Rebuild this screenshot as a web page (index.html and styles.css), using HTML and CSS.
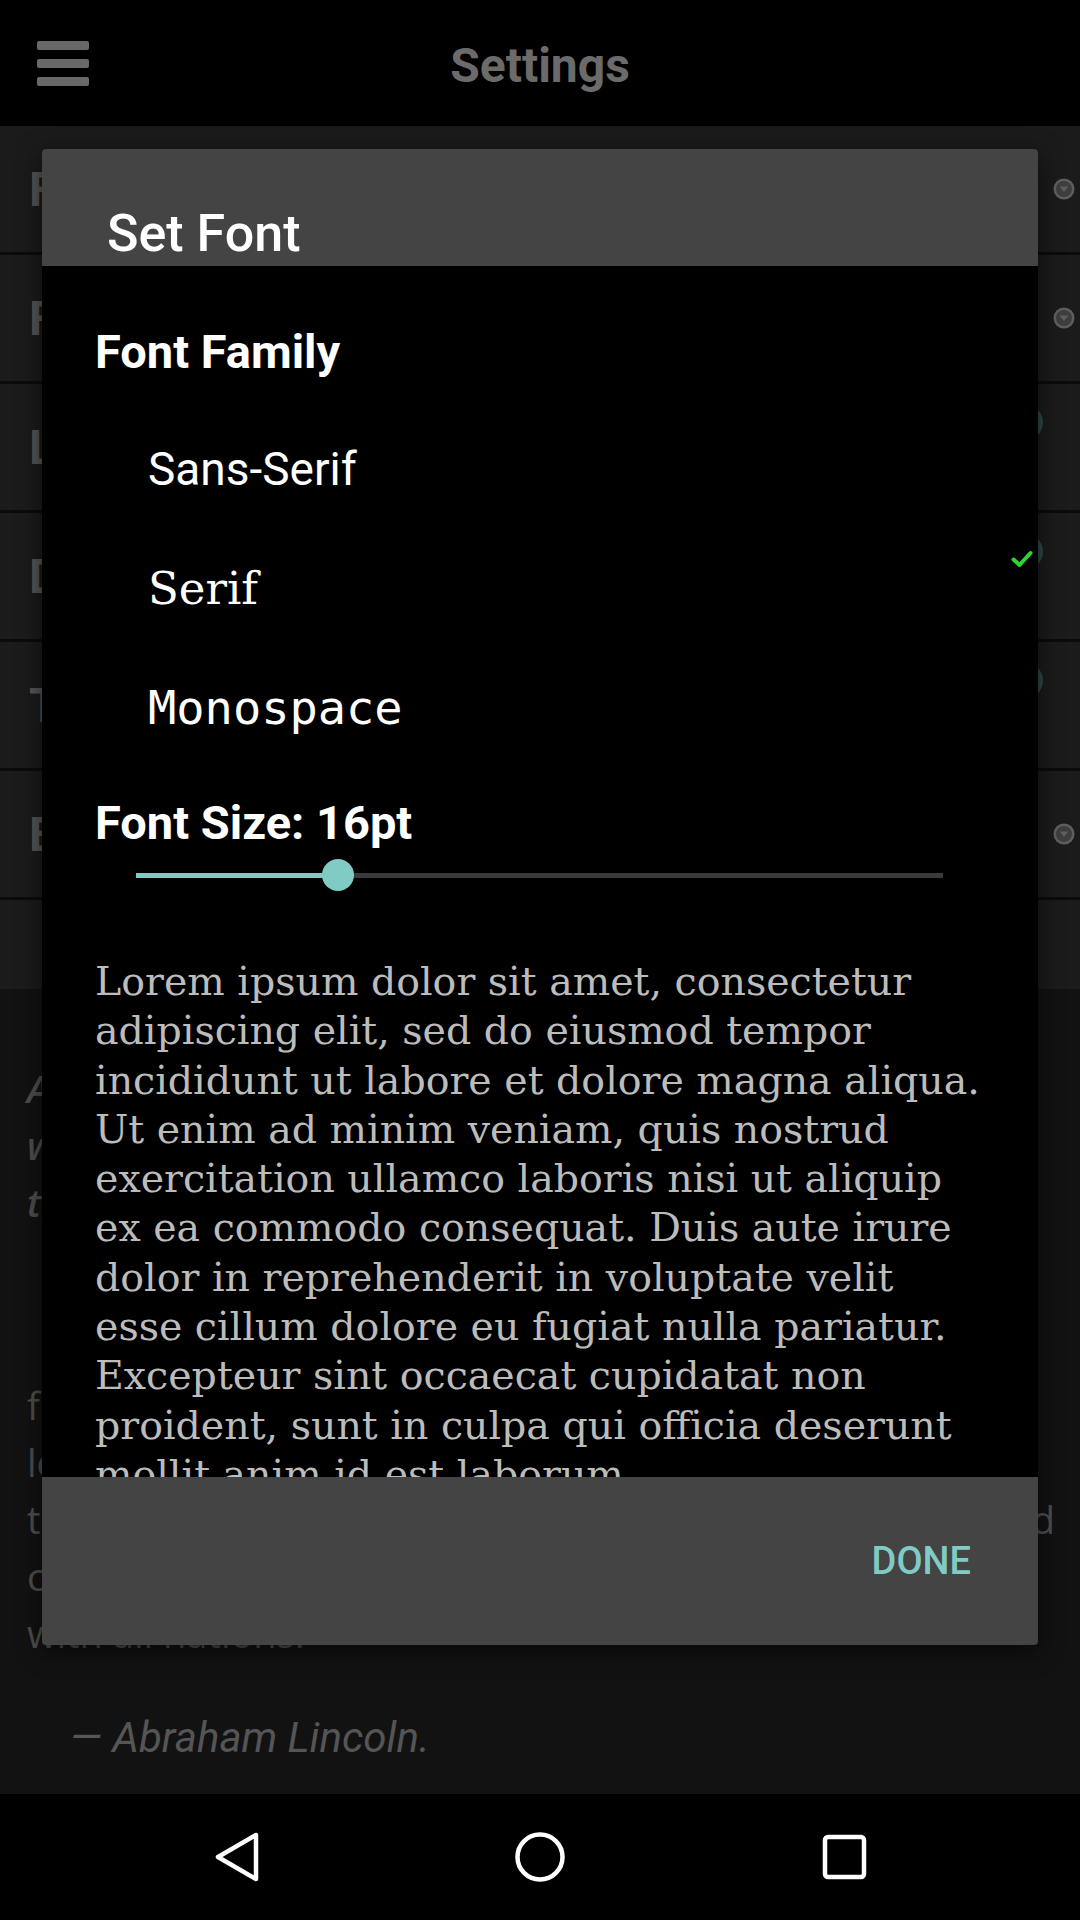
FILE: index.html
```html
<!DOCTYPE html>
<html lang="en">
<head>
<meta charset="utf-8">
<title>Settings – Set Font</title>
<link rel="stylesheet" href="styles.css">
</head>
<body>
<div class="screen">
  <header class="topbar">
    <div class="menu-btn" aria-label="Menu"><span></span><span></span><span></span></div>
    <h1 class="topbar-title">Settings</h1>
    <div class="topbar-end"></div>
  </header>

  <ul class="pref-list">
    <li class="pref">
      <span class="pref-title">Font</span>
      <svg class="pref-dropdown" viewBox="0 0 22 22" width="22" height="22"><circle cx="11" cy="11" r="10.5" fill="#5e5e5e"/><circle cx="11" cy="11" r="8" fill="#3e3e3e"/><path d="M6.5 8.5 H15.5 L11 14 Z" fill="#5e5e5e"/></svg>
    </li>
    <li class="pref">
      <span class="pref-title">Font Size</span>
      <svg class="pref-dropdown" viewBox="0 0 22 22" width="22" height="22"><circle cx="11" cy="11" r="10.5" fill="#5e5e5e"/><circle cx="11" cy="11" r="8" fill="#3e3e3e"/><path d="M6.5 8.5 H15.5 L11 14 Z" fill="#5e5e5e"/></svg>
    </li>
    <li class="pref">
      <span class="pref-title">Line Numbers</span>
      <span class="pref-knob"></span>
    </li>
    <li class="pref">
      <span class="pref-title">Dark Theme</span>
      <span class="pref-knob"></span>
    </li>
    <li class="pref">
      <span class="pref-title">Text Wrap</span>
      <span class="pref-knob"></span>
    </li>
    <li class="pref">
      <span class="pref-title">Encoding</span>
      <svg class="pref-dropdown" viewBox="0 0 22 22" width="22" height="22"><circle cx="11" cy="11" r="10.5" fill="#5e5e5e"/><circle cx="11" cy="11" r="8" fill="#3e3e3e"/><path d="M6.5 8.5 H15.5 L11 14 Z" fill="#5e5e5e"/></svg>
    </li>
    <li class="pref pref-empty"></li>
  </ul>

  <section class="preview">
    <p class="preview-intro">Abraham Lincoln's Second Inaugural Address,<br>written in the closing weeks of the Civil War,<br>then ends with the famous passage:</p>
    <p class="preview-quote">firmness in the right, as God gives us to see the right,<br>let us strive on to finish the work we are in, to bind<br>the nation's wounds, to do all which may ever achieve and<br>cherish a just and lasting peace among ourselves and<br>with all nations.</p>
    <p class="preview-cite">— Abraham Lincoln.</p>
  </section>

  <nav class="navbar">
    <button class="nav-btn" aria-label="Back">
      <svg viewBox="0 0 96 96" width="96" height="96"><path d="M67 26 V70 L29 48 Z" fill="none" stroke="#fff" stroke-width="4.5" stroke-linejoin="round"/></svg>
    </button>
    <button class="nav-btn" aria-label="Home">
      <svg viewBox="0 0 96 96" width="96" height="96"><circle cx="48" cy="48" r="22.5" fill="none" stroke="#fff" stroke-width="4.5"/></svg>
    </button>
    <button class="nav-btn" aria-label="Recents">
      <svg viewBox="0 0 96 96" width="96" height="96"><rect x="30" y="28" width="39" height="40" rx="3" fill="none" stroke="#fff" stroke-width="4.5"/></svg>
    </button>
  </nav>

  <div class="dialog" role="dialog">
    <div class="dialog-title">Set Font</div>
    <div class="dialog-body">
      <h2 class="section-label">Font Family</h2>
      <ul class="font-options">
        <li class="font-option opt-sans">Sans-Serif</li>
        <li class="font-option opt-serif">Serif
          <svg class="check" viewBox="0 0 22 18" width="22" height="18"><path d="M2.5 9.5 L8.5 15 L19.5 3" fill="none" stroke="#2fd52f" stroke-width="4" stroke-linecap="round" stroke-linejoin="round"/></svg>
        </li>
        <li class="font-option opt-mono">Monospace</li>
      </ul>
      <h2 class="section-label size-label">Font Size: 16pt</h2>
      <div class="slider">
        <div class="slider-track">
          <div class="slider-fill" style="width: 25%"></div>
          <div class="slider-thumb" style="left: 25%"></div>
        </div>
      </div>
      <p class="sample">Lorem ipsum dolor sit amet, consectetur adipiscing elit, sed do eiusmod tempor incididunt ut labore et dolore magna aliqua. Ut enim ad minim veniam, quis nostrud exercitation ullamco laboris nisi ut aliquip ex ea commodo consequat. Duis aute irure dolor in reprehenderit in voluptate velit esse cillum dolore eu fugiat nulla pariatur. Excepteur sint occaecat cupidatat non proident, sunt in culpa qui officia deserunt mollit anim id est laborum.</p>
    </div>
    <div class="dialog-actions">
      <button class="btn-done">DONE</button>
    </div>
  </div>
</div>
</body>
</html>
```

FILE: styles.css
```css
* { box-sizing: border-box; }

html, body {
  margin: 0;
  padding: 0;
  background: #121212;
}

.screen {
  position: relative;
  width: 1080px;
  height: 1920px;
  overflow: hidden;
  display: flex;
  flex-direction: column;
  font-family: Roboto, "Noto Sans", sans-serif;
  background: #121212;
}

/* ---------- top bar ---------- */
.topbar {
  height: 126px;
  flex: none;
  background: #000;
  display: grid;
  grid-template-columns: 1fr auto 1fr;
  align-items: center;
}

.menu-btn {
  margin-left: 37px;
  width: 52px;
  display: flex;
  flex-direction: column;
  gap: 9px;
}

.menu-btn span {
  display: block;
  height: 9px;
  border-radius: 2px;
  background: #686868;
}

.topbar-title {
  margin: 0;
  padding-top: 5px;
  font-size: 48px;
  font-weight: 700;
  color: #6b6b6b;
}

/* ---------- preference list (dimmed behind dialog) ---------- */
.pref-list {
  list-style: none;
  margin: 0;
  padding: 0;
  flex: none;
}

.pref {
  height: 129px;
  border-bottom: 3px solid #0b0b0b;
  background: #1b1b1b;
  display: flex;
  align-items: center;
  padding-left: 29px;
}

.pref-empty {
  height: 89px;
  border-bottom: 0;
}

.pref-title {
  font-size: 48px;
  font-weight: 700;
  color: #565656;
  flex: 1;
  white-space: nowrap;
}

.pref-dropdown {
  flex: none;
  margin-right: 5px;
}

.pref-knob {
  flex: none;
  align-self: flex-start;
  margin-top: 20px;
  margin-right: 37px;
  width: 37px;
  height: 37px;
  border-radius: 50%;
  background: #2e4b48;
}

/* ---------- preview text (dimmed) ---------- */
.preview {
  flex: 1;
  padding: 71px 30px 0 27px;
  font-family: "Open Sans", sans-serif;
  color: #4e4e4e;
  white-space: nowrap;
}

.preview p { margin: 0; }

.preview-intro {
  font-size: 38px;
  line-height: 57px;
  font-style: italic;
  font-weight: 600;
}

.preview .preview-quote {
  margin-top: 146px;
  font-size: 38px;
  line-height: 57px;
}

.preview .preview-cite {
  margin-top: 47px;
  padding-left: 43px;
  font-family: Roboto, sans-serif;
  font-style: italic;
  font-weight: 400;
  font-size: 42px;
  line-height: 57px;
  color: #555;
}

/* ---------- navigation bar ---------- */
.navbar {
  height: 126px;
  flex: none;
  background: #000;
  display: flex;
  justify-content: center;
  align-items: center;
  gap: 207px;
}

.nav-btn {
  width: 96px;
  height: 96px;
  padding: 0;
  border: 0;
  background: none;
}

.nav-btn svg { display: block; }

/* ---------- dialog ---------- */
.dialog {
  position: absolute;
  left: 42px;
  top: 149px;
  width: 996px;
  height: 1496px;
  border-radius: 4px;
  overflow: hidden;
  display: flex;
  flex-direction: column;
  background: #000;
  box-shadow: 0 6px 24px rgba(0, 0, 0, 0.6);
}

.dialog-title {
  height: 117px;
  flex: none;
  background: #444;
  display: flex;
  align-items: flex-end;
  padding: 0 0 6px 65px;
  font-size: 52px;
  line-height: 52px;
  font-weight: 500;
  color: #fff;
}

.dialog-body {
  height: 1211px;
  flex: none;
  overflow: hidden;
  padding: 56px 53px 0 53px;
  background: #000;
}

.section-label {
  margin: 0 0 28px;
  font-size: 47px;
  line-height: 60px;
  font-weight: 700;
  color: #fff;
}

.font-options {
  list-style: none;
  margin: 0 -48px 0 0;
  padding: 0;
}

.font-option {
  height: 119px;
  line-height: 119px;
  padding-left: 53px;
  display: flex;
  font-size: 46px;
  color: #fff;
}

.opt-sans { font-family: Roboto, sans-serif; }
.opt-serif { font-family: "DejaVu Serif", serif; font-size: 45px; }
.opt-mono { font-family: "DejaVu Sans Mono", monospace; font-size: 47px; }

.check {
  margin-left: auto;
  margin-top: 21px;
  flex: none;
}

.section-label.size-label {
  margin: 26px 0 0;
}

.slider {
  height: 44px;
  margin: 0 42px 0 41px;
  display: flex;
  align-items: center;
}

.slider-track {
  position: relative;
  flex: 1;
  height: 5px;
  background: #3a3a3a;
}

.slider-fill {
  height: 100%;
  background: #80cbc4;
}

.slider-thumb {
  position: absolute;
  top: 50%;
  width: 32px;
  height: 32px;
  margin: -16px 0 0 -16px;
  border-radius: 50%;
  background: #80cbc4;
}

.sample {
  margin: 60px 0 0;
  font-family: "DejaVu Serif", serif;
  font-size: 39.5px;
  line-height: 49.3px;
  color: #bcbcbc;
}

.dialog-actions {
  height: 168px;
  flex: none;
  background: #444;
  display: flex;
  justify-content: flex-end;
  align-items: center;
  padding-right: 67px;
}

.btn-done {
  padding: 0;
  border: 0;
  background: none;
  font-family: Roboto, sans-serif;
  font-size: 38px;
  font-weight: 500;
  color: #80cbc4;
}
```
